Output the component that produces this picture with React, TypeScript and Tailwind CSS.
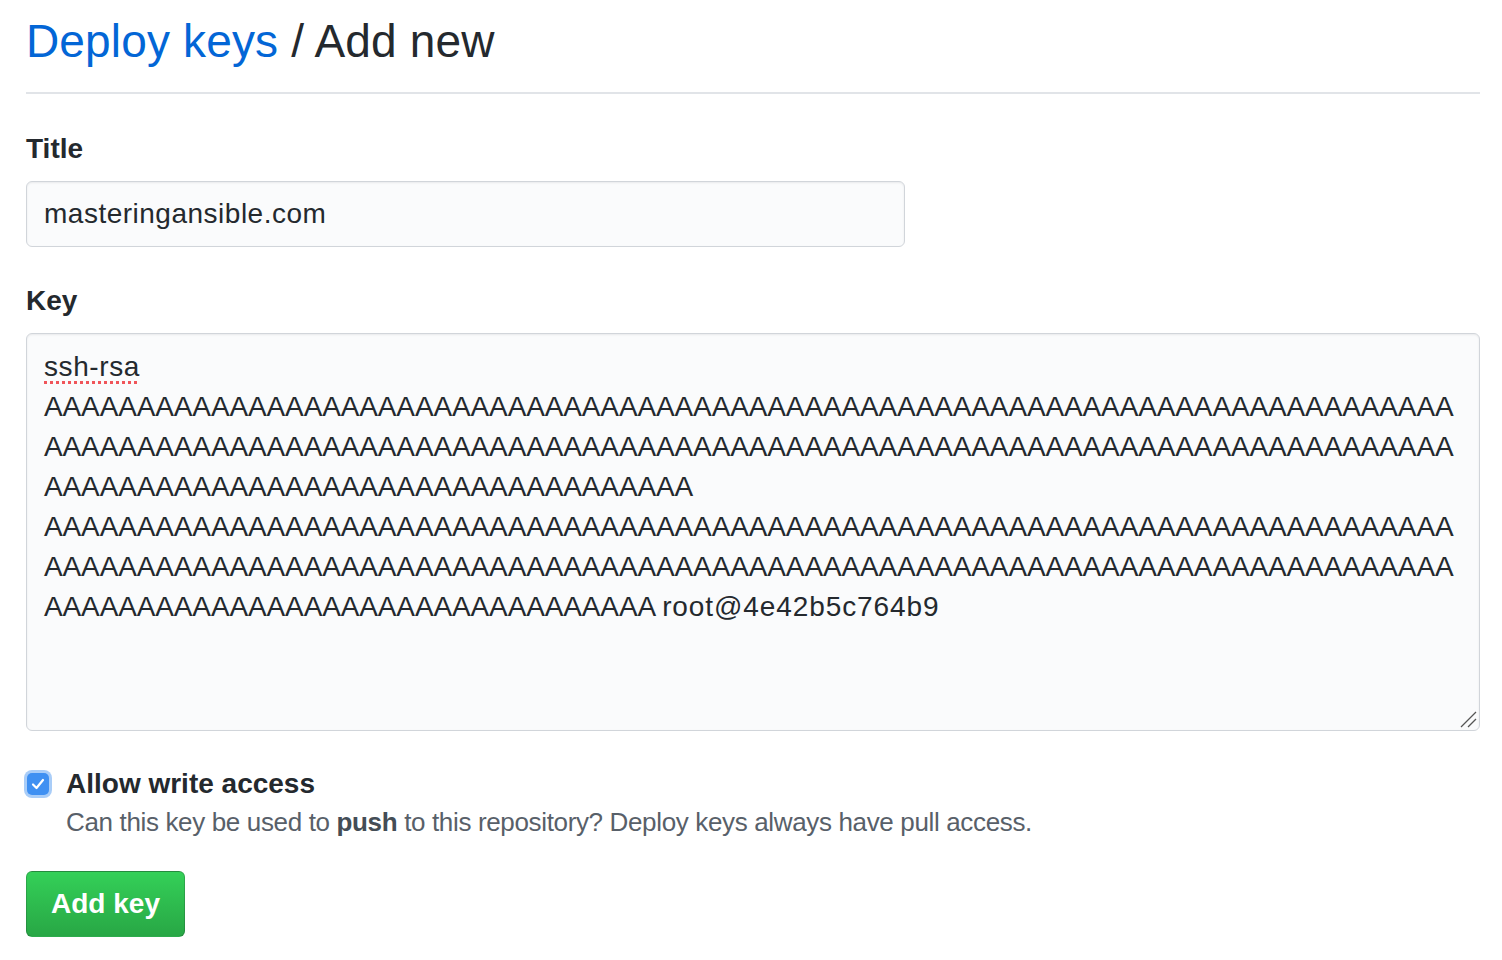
import React from "react";

const A = (n: number) => "A".repeat(n);

export default function App() {
  const lines = [A(76), A(76), A(35), A(76), A(76)];
  return (
    <div className="w-[1502px] h-[960px] bg-white pl-[26px] pr-[22px] font-['Liberation_Sans',Arial,sans-serif] text-[#24292e]">
      <div className="pt-[13px] pb-[23px] border-b-2 border-[#e1e4e8]">
        <h1 className="text-[46px] leading-[56px] font-normal tracking-[0.15px]">
          <span className="text-[#0366d6]">Deploy keys</span> / Add new
        </h1>
      </div>

      <div className="mt-[35px] text-[28px] leading-[40px] font-bold">Title</div>
      <div className="mt-[12px] w-[879px] h-[66px] border border-[#d1d5da] rounded-[6px] bg-[#fafbfc] flex items-center pl-[17px] shadow-[inset_0_1px_2px_rgba(27,31,35,0.075)]">
        <span className="text-[28px] leading-[40px] tracking-[0.5px]">masteringansible.com</span>
      </div>

      <div className="mt-[34px] text-[28px] leading-[40px] font-bold">Key</div>
      <div className="relative mt-[12px] h-[398px] border border-[#d1d5da] rounded-[6px] bg-[#fafbfc] pt-[13px] pl-[17px] overflow-hidden shadow-[inset_0_1px_2px_rgba(27,31,35,0.075)]">
        <div className="text-[28px] leading-[40px] whitespace-pre tracking-[-0.13px]">
          <div>
            <span className="underline decoration-dotted decoration-[#f0555a] decoration-[3px] underline-offset-[5px] tracking-[0.6px]">ssh-rsa</span>
          </div>
          {lines.map((l, i) => (
            <div key={i}>{l}</div>
          ))}
          <div>
            {A(33)} <span className="tracking-[0.9px]">root@4e42b5c764b9</span>
          </div>
        </div>
        <svg
          className="absolute right-[2px] bottom-[2px]"
          width="17"
          height="17"
          viewBox="0 0 17 17"
        >
          <line x1="1" y1="16" x2="16" y2="1" stroke="#555" strokeWidth="1.3" />
          <line x1="8" y1="16" x2="16" y2="8" stroke="#555" strokeWidth="1.3" />
        </svg>
      </div>

      <div className="mt-[33px] flex items-center h-[40px]">
        <div className="ml-[1px] w-[22px] h-[22px] rounded-[5px] bg-[#3f90f2] ring-[3px] ring-[#a9cdf8] flex items-center justify-center">
          <svg width="14" height="12" viewBox="0 0 14 12">
            <polyline
              points="2,6.5 5.5,10 12,2"
              fill="none"
              stroke="white"
              strokeWidth="2.2"
              strokeLinecap="round"
              strokeLinejoin="round"
            />
          </svg>
        </div>
        <span className="ml-[17px] text-[28px] leading-[40px] font-bold">Allow write access</span>
      </div>
      <div className="pl-[40px] text-[26px] leading-[36px] text-[#586069] tracking-[-0.35px]">
        Can this key be used to <b className="font-bold text-[#444d56]">push</b> to this repository? Deploy keys always have pull access.
      </div>

      <button className="mt-[31px] w-[159px] h-[66px] rounded-[6px] border border-[rgba(27,31,35,0.2)] bg-gradient-to-b from-[#34d058] to-[#28a745] text-white text-[28px] font-bold leading-[40px] flex items-center justify-center">
        Add key
      </button>
    </div>
  );
}
